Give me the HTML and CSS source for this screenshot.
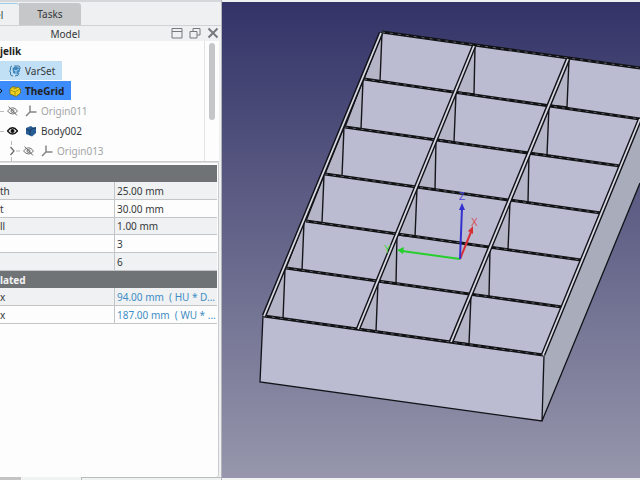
FILE: index.html
```
<!DOCTYPE html>
<html lang="en">
<head>
<meta charset="utf-8">
<title>Model</title>
<link rel="stylesheet" href="styles.css">
</head>
<body>
<div class="app">
  <aside class="side">
    <nav class="tabs">
      <button class="tab tab-active" type="button">el</button>
      <button class="tab" type="button">Tasks</button>
    </nav>
    <header class="dock-title">
      <h1>Model</h1>
      <div class="dock-actions">
        <button type="button" aria-label="Collapse"><svg width="12" height="12" viewBox="0 0 12 12"><path d="M1 1.5h10v9.5H1zM1 4.5h10"/></svg></button>
        <button type="button" aria-label="Float"><svg width="12" height="12" viewBox="0 0 12 12"><path d="M4 4V1.500h7V8H8M1 4.500h7v6.500H1z"/></svg></button>
        <button type="button" aria-label="Close"><svg class="heavy" width="12" height="12" viewBox="0 0 12 12"><path d="M1.500 1.500l9 9M10.500 1.500l-9 9"/></svg></button>
      </div>
    </header>
    <div class="tree">
      <ul>
        <li class="root"><b>jelik</b></li>
        <li class="hint"><span class="gap-var"></span>
          <svg width="12" height="12" viewBox="0 0 12 12"><path d="M3 1Q1.500 1 1.500 3v2L.5 6l1 1v2q0 2 2.500 2M5 1h5q1.500 1 1 3M6 11q4 0 4-3" fill="none" stroke="#3778a8"/><path d="M3.500 3l3-1.500L11 3v3L8 9.500 4 8z" fill="#3f86bd"/><path d="M5 5l2 1 3-2M7 6v3" fill="none" stroke="#a9d4f2"/></svg>
          <span>VarSet</span></li>
        <li class="chosen">
          <svg width="4" height="12" viewBox="0 0 4 12"><path d="M-3 3.500Q1 3 2 6 0 9-3 8.500" fill="none" stroke="#111"/></svg>
          <span class="gap-grid"></span>
          <svg width="12" height="12" viewBox="0 0 12 12"><path d="M1 4l3-2.500 3 1L9 2l2.500 2v4L7 11.500 1 9z" fill="#f0d322" stroke="#6b5f08" stroke-width=".7"/><path d="M1.500 5L6 7l5-3M6 7v4M4 2l1 2 3-1" fill="none" stroke="#9c8910" stroke-width=".8"/></svg>
          <b>TheGrid</b></li>
        <li class="dim">
          <i class="dash"></i>
          <svg width="11" height="12" viewBox="0 0 11 12"><path d="M.5 6Q5.500-.5 10.500 6 5.500 12 .5 6zM1.500 1.500l8.500 9" fill="none" stroke="#707070"/><circle cx="5.500" cy="6" r="1.500" fill="none" stroke="#707070"/></svg>
          <svg class="axis" width="12" height="12" viewBox="0 0 12 12"><path d="M5 .5V7M5 7h6.500M5 7L1 11" fill="none" stroke="#858585" stroke-width="1.500"/></svg>
          <span>Origin011</span></li>
        <li>
          <i class="dash"></i>
          <svg width="11" height="12" viewBox="0 0 11 12"><path d="M.5 6Q5.500-.5 10.500 6 5.500 12 .5 6z" fill="#fff" stroke="#111" stroke-width="1.300"/><circle cx="5.500" cy="6" r="2" fill="#111"/></svg>
          <svg class="axis" width="12" height="12" viewBox="0 0 12 12"><path d="M1 3l5-2 2 1.500L11 2v6l-4 3.500L1 9z" fill="#285c94"/><path d="M1 4l4 2 2-2.500L11 3M5 6v4" fill="none" stroke="#163b66"/></svg>
          <span>Body002</span></li>
        <li class="dim nested">
          <svg width="10" height="20" viewBox="0 0 10 20"><path d="M1.500 0v4M1.500 16v4M6 10h4" fill="none" stroke="#bbb"/><path d="M.5 6l3.500 4-3.500 4" fill="none" stroke="#666" stroke-width="1.200"/></svg>
          <svg class="eye" width="11" height="12" viewBox="0 0 11 12"><path d="M.5 6Q5.500-.5 10.500 6 5.500 12 .5 6zM1.500 1.500l8.500 9" fill="none" stroke="#707070"/><circle cx="5.500" cy="6" r="1.500" fill="none" stroke="#707070"/></svg>
          <svg class="axis" width="12" height="12" viewBox="0 0 12 12"><path d="M5 .5V7M5 7h6.500M5 7L1 11" fill="none" stroke="#858585" stroke-width="1.500"/></svg>
          <span>Origin013</span></li>
      </ul>
      <div class="track"><div class="thumb"></div></div>
    </div>
    <div class="props">
      <table>
        <colgroup><col class="names"><col></colgroup>
        <tbody>
          <tr class="group"><th colspan="2"></th></tr>
          <tr><td>th</td><td>25.00 mm</td></tr>
          <tr><td>t</td><td>30.00 mm</td></tr>
          <tr><td>ll</td><td>1.00 mm</td></tr>
          <tr><td></td><td>3</td></tr>
          <tr><td></td><td>6</td></tr>
          <tr class="group"><th colspan="2">lated</th></tr>
          <tr class="linked"><td>x</td><td>94.00 mm&nbsp; ( HU * D...</td></tr>
          <tr class="linked"><td>x</td><td>187.00 mm&nbsp; ( WU * ...</td></tr>
        </tbody>
      </table>
    </div>
    <div class="foot"><span class="foot-dark"></span><span class="foot-tab"></span><span class="foot-rest"></span></div>
  </aside>
  <main class="view">
    <svg class="scene" viewBox="222 2 418 476" preserveAspectRatio="xMinYMin slice" role="img" aria-label="Grid tray">
      <path class="side-face" d="M543 355L640 119V183L542 421z"/>
      <path class="face" d="M382 32L640 68V119L543 355 542 421 260 382 263 316z"/>
      <g class="shade">
        <path d="M382 32L380 82 364 79zM363 80L361 129 345 127zM344 127L342 176 325 174zM324 175L322 223 306 221zM304 222L302 271 286 268zM285 269L283 319 264 316z"/>
        <path d="M475 46L474 94 456 92zM456 93L454 142 436 139zM436 140L435 190 417 187zM417 188L415 237 397 235zM397 235L396 284 378 282zM378 282L376 331 358 329z"/>
        <path d="M569 59L567 107 549 105zM549 106L547 155 529 153zM529 154L528 202 510 200zM510 201L508 250 490 247zM490 248L489 297 470 295zM471 295L469 344 451 342z"/>
      </g>
      <path class="bar" d="M382 32L640 68M364 79L640 119M345 127L620 166M325 174L601 213M306 221L581 260M286 268L562 307M264 316L543 355"/>
      <path class="bar-light" d="M382 32L640 68M364 79L640 119M345 127L620 166M325 174L601 213M306 221L581 260M286 268L562 307M264 316L543 355"/>
      <path class="rail" d="M381 33L264 316M474 46L358 329M568 59L451 342M640 119L543 355"/>
      <path class="rail-light" d="M381 33L264 316M474 46L358 329M568 59L451 342M640 119L543 355"/>
      <path class="edge" d="M263 316L260 382 542 421 544 356M542 421L640 183"/>
      <g class="axes">
        <path d="M460 259L402 251" stroke="#27cf2d"/><path d="M397 250l7-3-1 7z" fill="#27cf2d"/>
        <path d="M460 259L471 232" stroke="#d82f35"/><path d="M473 226l-5 5 5 3z" fill="#d82f35"/>
        <path d="M460 259L462 208" stroke="#3430cf"/><path d="M462 203l-3 7h6z" fill="#3430cf"/>
        <text x="459" y="200" fill="#4845d8">Z</text>
        <text x="471" y="226" fill="#dc4a50">X</text>
        <text x="384" y="253" fill="#42d548">Y</text>
      </g>
    </svg>
    <div class="view-foot"></div>
  </main>
</div>
</body>
</html>
```
FILE: styles.css
```
* { box-sizing: border-box; }
body {
  margin: 0;
  background: #eff0f1;
  color: #35383b;
  font: 10px/16px "Noto Sans", "Open Sans", sans-serif;
}
button { border: 0; padding: 0; background: none; color: inherit; font: inherit; }
.app { display: flex; height: 100vh; overflow: hidden; }

.side {
  display: flex;
  flex: 0 0 222px;
  flex-direction: column;
  min-width: 0;
  border-right: 1px solid #b5b5ba;
}
.tabs {
  display: flex;
  height: 26px;
  padding-top: 3px;
  border-bottom: 1px solid #cfd1d2;
  box-shadow: inset 0 2px #d5d8da;
}
.tab { width: 62px; background: #c6c7c8; border-radius: 0 3px 0 0; }
.tab-active {
  width: 19px;
  background: #eff0f1;
  border-top: 1px solid #9fcbe4;
  text-align: left;
  text-indent: -5px;
}
.dock-title { position: relative; height: 15px; flex: none; }
.dock-title h1 { margin: 0; padding-right: 141px; font: inherit; text-align: right; }
.dock-actions { position: absolute; top: 1px; right: 2px; display: flex; gap: 6px; }
.dock-actions button { display: flex; }
.dock-actions svg { fill: none; stroke: #77797c; stroke-width: 1; }
.dock-actions .heavy { stroke-width: 2; }

.tree {
  display: flex;
  flex: 0 0 120px;
  margin-right: 2px;
  background: #fdfdfd;
  border-bottom: 1px solid #c9cbcc;
}
.tree ul { flex: 1; margin: 0; padding: 0; list-style: none; border-right: 1px solid #e2e3e4; }
.tree li { display: flex; align-items: center; height: 20px; }
.tree b { color: #222; }
.tree svg { flex: none; }
.tree .hint { width: 62px; height: 19px; margin-bottom: 1px; background: #c2e0f5; }
.tree .chosen { width: 71px; height: 19px; margin-bottom: 1px; background: #3c8cfb; }
.hint svg { margin-right: 4px; }
.chosen b { margin-left: 4px; }
.gap-var { width: 9px; }
.gap-grid { width: 5px; }
.dash { width: 4px; margin-right: 3px; border-top: 1px solid #bbb; }
.axis { margin: 0 4px 0 7px; }
.nested { padding-left: 10px; }
.nested .eye { margin-left: 3px; }
.dim span { color: #a3a5a6; }
.track { width: 14px; padding: 2px 4px; }
.thumb { height: 77px; border-radius: 3px; background: #c4c6c7; }

.props {
  flex: 1;
  margin-right: 2px;
  padding-top: 2px;
  border-top: 1px solid #dcdedf;
  border-right: 1px solid #c9cbcc;
  border-radius: 0 0 3px 0;
  background: #fdfdfd;
}
table { width: calc(100% - 1px); border-spacing: 0; table-layout: fixed; }
.names { width: 115px; }
tr { height: 18px; }
tr:nth-child(3n + 1) { height: 17px; }
th, td { padding: 0; line-height: 16px; text-align: left; white-space: nowrap; overflow: hidden; }
td { border-bottom: 1px solid #c3c5c7; }
td:first-child { border-right: 1px solid #c3c5c7; }
td + td { padding-left: 2px; }
tr:nth-child(even) td { background: #eff1f2; }
.group th { background: #707376; color: #f4f4f4; }
.linked td + td { color: #408dc4; }
.foot { display: flex; height: 3px; background: #f1f2f2; }
.foot-dark { width: 21px; background: #c4c4c4; }
.foot-tab { width: 60px; }
.foot-rest { flex: 1; border-top: 1px solid #b9bbbc; border-left: 1px solid #b9bbbc; }

.view { display: flex; flex: 1; flex-direction: column; min-width: 0; padding-top: 2px; }
.scene { flex: 1; width: 100%; min-height: 0; background: linear-gradient(#333368, #9696ac); }
.view-foot { height: 2px; background: #f1f2f2; }
.face { fill: #bbbcd2; }
.side-face { fill: #a9adbb; }
.shade { fill: #b4b6c7; }
.shade path { stroke: #15161a; stroke-width: 1.4; }
.bar { stroke: #101214; stroke-width: 3; }
.bar-light { stroke: #5c5e6b; stroke-width: 1; stroke-dasharray: 3 5; }
.rail { stroke: #111318; stroke-width: 4.6; }
.rail-light { stroke: #d6d7e2; stroke-width: 1.8; }
.edge { fill: none; stroke: #111318; stroke-width: 1.3; }
.axes path { stroke-width: 2; }
.axes text { font: 10px "Liberation Sans", sans-serif; }
```
